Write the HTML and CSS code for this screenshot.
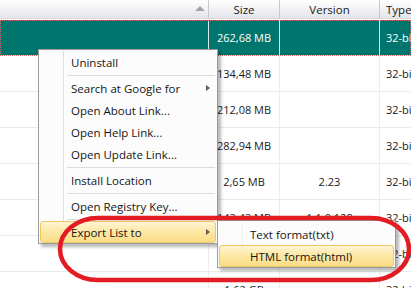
FILE: index.html
```html
<!DOCTYPE html>
<html lang="en">
<head>
  <meta charset="UTF-8">
  <title>Programs</title>
  <link rel="stylesheet" href="styles.css">
</head>
<body>
  <div class="list">
    <div class="head">
      <div class="hcell first"><span class="sort"></span></div>
      <div class="hcell">Size</div>
      <div class="hcell">Version</div>
      <div class="hcell type">Type</div>
    </div>

    <div class="row sel">
      <div class="cell"></div>
      <div class="cell">262,68 MB</div>
      <div class="cell"></div>
      <div class="cell type">32-bit</div>
    </div>
    <div class="row">
      <div class="cell"></div>
      <div class="cell">134,48 MB</div>
      <div class="cell"></div>
      <div class="cell type">32-bit</div>
    </div>
    <div class="row">
      <div class="cell"></div>
      <div class="cell">212,08 MB</div>
      <div class="cell"></div>
      <div class="cell type">32-bit</div>
    </div>
    <div class="row">
      <div class="cell"></div>
      <div class="cell">282,94 MB</div>
      <div class="cell"></div>
      <div class="cell type">32-bit</div>
    </div>
    <div class="row">
      <div class="cell"></div>
      <div class="cell">2,65 MB</div>
      <div class="cell">2.23</div>
      <div class="cell type">32-bit</div>
    </div>
    <div class="row">
      <div class="cell"></div>
      <div class="cell">143,43 MB</div>
      <div class="cell">1.1.0.128</div>
      <div class="cell type">32-bit</div>
    </div>
    <div class="row">
      <div class="cell"></div>
      <div class="cell"></div>
      <div class="cell"></div>
      <div class="cell type">32-bit</div>
    </div>
    <div class="row">
      <div class="cell"></div>
      <div class="cell">1,62 GB</div>
      <div class="cell"></div>
      <div class="cell type">32-bit</div>
    </div>
  </div>

  <!-- context menu -->
  <div class="menu main">
    <div class="item">Uninstall</div>
    <div class="sep"></div>
    <div class="item">Search at Google for<span class="arrow"></span></div>
    <div class="item">Open About Link...</div>
    <div class="item">Open Help Link...</div>
    <div class="item">Open Update Link...</div>
    <div class="sep"></div>
    <div class="item">Install Location</div>
    <div class="sep"></div>
    <div class="item">Open Registry Key...</div>
    <div class="sep"></div>
    <div class="item hot">Export List to<span class="arrow"></span></div>
  </div>

  <div class="menu sub">
    <div class="item">Text format(txt)</div>
    <div class="item hot">HTML format(html)</div>
  </div>

  <svg class="mark" width="411" height="288" viewBox="0 0 411 288">
    <rect x="60" y="218" width="349" height="62" rx="38" ry="31" fill="none" stroke="#e31b23" stroke-width="4.5"/>
  </svg>
</body>
</html>
```

FILE: styles.css
```css
* {
  margin: 0;
  padding: 0;
  box-sizing: border-box;
}

html {
  overflow: hidden;
}

body {
  font-family: "Open Sans", "Noto Sans", sans-serif;
  font-size: 11px;
  color: #1a1a1a;
  background: #ffffff;
  width: 411px;
  height: 288px;
  overflow: hidden;
  position: relative;
}

/* list view */
.list {
  width: 411px;
  height: 288px;
  overflow: hidden;
}

.head {
  display: grid;
  grid-template-columns: 209px 71px 100px 1fr;
  height: 19px;
  background: linear-gradient(#ffffff, #e4e5ea);
  border-bottom: 1px solid #d6d7dc;
  margin-bottom: 1px;
}

.hcell {
  display: flex;
  align-items: center;
  justify-content: center;
  border-right: 1px solid #c9cacf;
  white-space: nowrap;
  overflow: hidden;
  font-size: 11.5px;
}

.hcell.first {
  justify-content: flex-end;
  padding-right: 3px;
}

.hcell.type {
  justify-content: flex-start;
  padding-left: 6px;
  border-right: none;
}

.sort {
  width: 0;
  height: 0;
  border-left: 5px solid transparent;
  border-right: 5px solid transparent;
  border-bottom: 5px solid #a3a3a8;
  margin-bottom: 2px;
}

.row {
  display: grid;
  grid-template-columns: 209px 71px 100px 1fr;
  height: 36px;
  border-bottom: 1px solid #ebebeb;
}

.cell {
  display: flex;
  align-items: center;
  justify-content: center;
  border-right: 1px solid #ececec;
  white-space: nowrap;
  overflow: hidden;
}

.cell.type {
  justify-content: flex-start;
  padding-left: 6px;
  border-right: none;
}

.row.sel {
  background: #00756e;
  color: #ffffff;
  outline: 1px dotted #d46a6a;
  outline-offset: -1px;
}

.row.sel .cell {
  border-right-color: rgba(255, 255, 255, 0.85);
}

.row.sel .cell.type {
  border-right: none;
}

/* menus */
.menu {
  position: absolute;
  background: #fcfcfc;
  border: 1px solid #9b9b9b;
  box-shadow: 3px 3px 3px rgba(0, 0, 0, 0.28);
  padding: 1px 1px 0 1px;
}

.menu::before {
  content: "";
  position: absolute;
  top: 1px;
  bottom: 1px;
  left: 24px;
  width: 1px;
  background: #dedfdf;
  box-shadow: 1px 0 #ffffff;
}

.main {
  left: 38px;
  top: 49px;
  width: 180px;
}

.sub {
  left: 217px;
  top: 220px;
  width: 179px;
  padding-top: 2px;
}

.sub::before {
  background: #eeeeee;
}

.item {
  position: relative;
  display: flex;
  align-items: center;
  height: 22px;
  padding-left: 30px;
  padding-right: 5px;
  border: 1px solid transparent;
  border-radius: 3px;
  font-size: 11.5px;
  color: #151515;
  white-space: nowrap;
}

.item.hot {
  background: linear-gradient(#fef5d4 0%, #fde8a6 45%, #fbdd86 100%);
  border-color: #e9c868;
}

.arrow {
  margin-left: auto;
  width: 0;
  height: 0;
  border-top: 3.5px solid transparent;
  border-bottom: 3.5px solid transparent;
  border-left: 4px solid #5b5b5b;
}

.sep {
  height: 1px;
  background: #dcdcdc;
  box-shadow: 0 1px #ffffff;
  margin: 2px 1px 1px 27px;
  position: relative;
}

/* red annotation */
.mark {
  position: absolute;
  left: 0;
  top: 0;
  pointer-events: none;
}
```
